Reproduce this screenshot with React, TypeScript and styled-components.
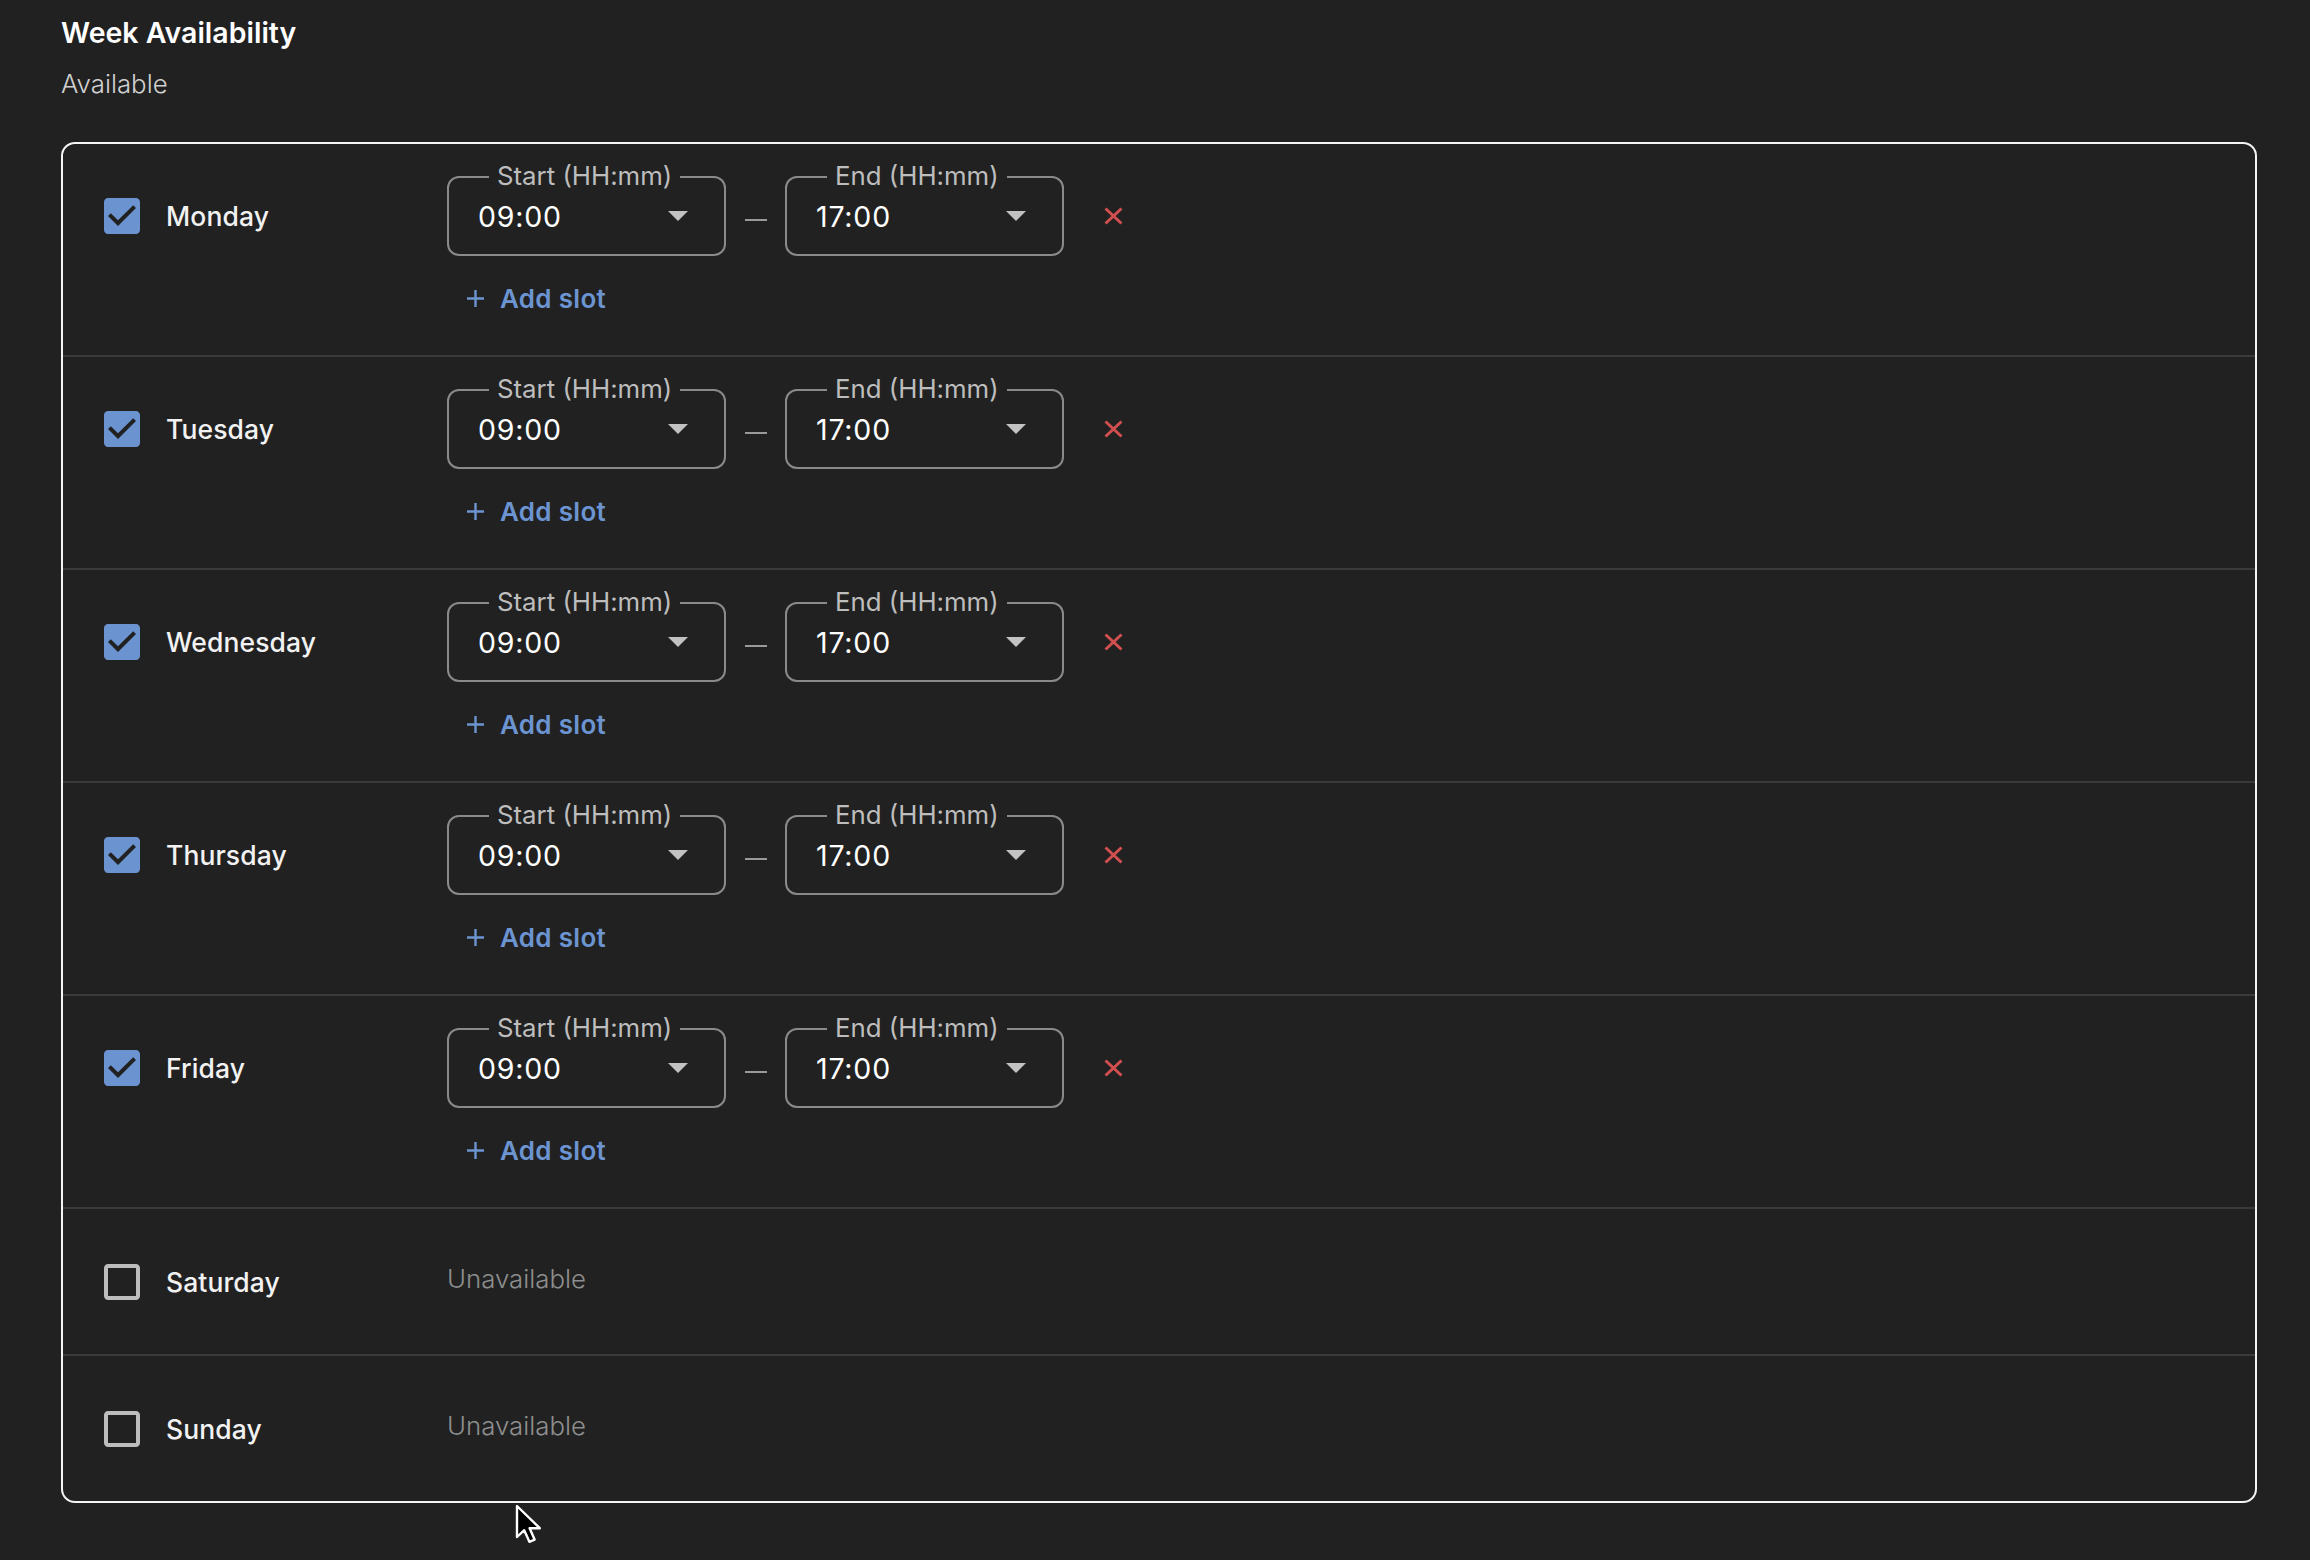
import React from "react";
import styled, { createGlobalStyle } from "styled-components";

const GlobalStyle = createGlobalStyle`
  html, body {
    margin: 0;
    padding: 0;
    background: #212121;
  }
  body {
    font-family: Inter, "Noto Sans", "Liberation Sans", sans-serif;
    color: #ffffff;
  }
  * { box-sizing: border-box; }
`;

const Page = styled.div`
  position: relative;
  min-height: 1560px;
  padding: 16px 53px 0 61px;
`;

const Title = styled.h1`
  margin: 0;
  font-size: 28.5px;
  line-height: 1.2;
  font-weight: 600;
  color: #ffffff;
`;

const Subtitle = styled.p`
  margin: 19px 0 0;
  font-size: 25.8px;
  line-height: 1.2;
  font-weight: 300;
  color: #d0d0d0;
`;

const Card = styled.div`
  margin-top: 42px;
  border: 2px solid #f4f4f4;
  border-radius: 14px;
  overflow: hidden;
`;

const Row = styled.div<{ $available: boolean }>`
  display: flex;
  align-items: ${(p) => (p.$available ? "flex-start" : "center")};
  padding: ${(p) => (p.$available ? "32px 0 39px 35px" : "0 0 0 35px")};
  height: ${(p) => (p.$available ? "auto" : "147px")};
  border-bottom: 2px solid #3a3a3a;
  &:last-child {
    border-bottom: none;
    height: ${(p) => (p.$available ? "auto" : "145px")};
  }
`;

const DayCell = styled.div`
  width: 349px;
  height: 80px;
  display: flex;
  align-items: center;
  gap: 20px;
  flex-shrink: 0;
`;

const DayName = styled.span`
  font-size: 26.5px;
  font-weight: 500;
  color: #f2f2f2;
  letter-spacing: 0.1px;
`;

const CheckIcon = styled.svg`
  width: 48px;
  height: 48px;
  display: block;
`;

const SlotColumn = styled.div`
  display: flex;
  flex-direction: column;
  align-items: flex-start;
`;

const SlotLine = styled.div`
  display: flex;
  align-items: center;
  height: 80px;
`;

const Field = styled.div`
  position: relative;
  width: 279px;
  height: 80px;
  border: 2px solid #8a8a8a;
  border-radius: 12px;
  display: flex;
  align-items: center;
  justify-content: space-between;
  padding: 0 36px 0 29px;
`;

const FieldLabel = styled.span`
  position: absolute;
  top: -17px;
  left: 40px;
  padding: 0 8px;
  background: #212121;
  font-size: 25.8px;
  line-height: 30px;
  font-weight: 400;
  color: #bdbdbd;
  white-space: nowrap;
`;

const FieldValue = styled.span`
  font-size: 28.5px;
  font-weight: 400;
  color: #ffffff;
  letter-spacing: 0.8px;
`;

const Dash = styled.span`
  width: 22px;
  height: 2px;
  background: #9a9a9a;
  margin: 8px 18px 0 19px;
`;

const RemoveButton = styled.button`
  margin-left: 40px;
  padding: 0;
  border: none;
  background: none;
  display: flex;
  align-items: center;
  cursor: pointer;
`;

const AddSlot = styled.button`
  margin-top: 24px;
  margin-left: 20px;
  padding: 0;
  height: 36px;
  border: none;
  background: none;
  display: flex;
  align-items: center;
  gap: 16px;
  font-family: inherit;
  font-size: 26px;
  font-weight: 600;
  letter-spacing: 0.3px;
  color: #6c94d1;
  cursor: pointer;
`;

const Unavailable = styled.span`
  font-size: 25.8px;
  font-weight: 300;
  color: #8e8e8e;
  margin-top: -6px;
`;

const Cursor = styled.svg`
  position: absolute;
  left: 515px;
  top: 1504px;
  width: 26px;
  height: 40px;
`;

const Checkbox = ({ checked }: { checked: boolean }) => (
  <CheckIcon viewBox="0 0 24 24">
    {checked ? (
      <path
        fill="#6b93d0"
        d="M19 3H5c-1.11 0-2 .9-2 2v14c0 1.1.89 2 2 2h14c1.11 0 2-.9 2-2V5c0-1.1-.89-2-2-2zm-9 14l-5-5 1.41-1.41L10 14.17l7.59-7.59L19 8l-9 9z"
      />
    ) : (
      <path
        fill="#bdbdbd"
        d="M19 5v14H5V5h14m0-2H5c-1.1 0-2 .9-2 2v14c0 1.1.9 2 2 2h14c1.1 0 2-.9 2-2V5c0-1.1-.9-2-2-2z"
      />
    )}
  </CheckIcon>
);

const Arrow = () => (
  <svg width="20" height="10" viewBox="0 0 20 10">
    <path d="M0 0h20L10 10z" fill="#c2c2c2" />
  </svg>
);

const CloseX = () => (
  <svg width="19" height="18" viewBox="0 0 19 18">
    <path d="M1.5 1.5L17.5 16.5M17.5 1.5L1.5 16.5" stroke="#d24f4f" strokeWidth="3" />
  </svg>
);

const Plus = () => (
  <svg width="17" height="17" viewBox="0 0 17 17">
    <path d="M8.5 0v17M0 8.5h17" stroke="#6c94d1" strokeWidth="2.4" />
  </svg>
);

const TimeField = ({ label, value }: { label: string; value: string }) => (
  <Field>
    <FieldLabel>{label}</FieldLabel>
    <FieldValue>{value}</FieldValue>
    <Arrow />
  </Field>
);

const days = [
  { name: "Monday", on: true },
  { name: "Tuesday", on: true },
  { name: "Wednesday", on: true },
  { name: "Thursday", on: true },
  { name: "Friday", on: true },
  { name: "Saturday", on: false },
  { name: "Sunday", on: false },
];

export default function App() {
  return (
    <Page>
      <GlobalStyle />
      <Title>Week Availability</Title>
      <Subtitle>Available</Subtitle>
      <Card>
        {days.map((d) => (
          <Row key={d.name} $available={d.on}>
            <DayCell>
              <Checkbox checked={d.on} />
              <DayName>{d.name}</DayName>
            </DayCell>
            {d.on ? (
              <SlotColumn>
                <SlotLine>
                  <TimeField label="Start (HH:mm)" value="09:00" />
                  <Dash />
                  <TimeField label="End (HH:mm)" value="17:00" />
                  <RemoveButton aria-label="Remove slot">
                    <CloseX />
                  </RemoveButton>
                </SlotLine>
                <AddSlot>
                  <Plus />
                  Add slot
                </AddSlot>
              </SlotColumn>
            ) : (
              <Unavailable>Unavailable</Unavailable>
            )}
          </Row>
        ))}
      </Card>
      <Cursor viewBox="0 0 13 20">
        <path
          d="M1 1v15.5l3.6-3.4 2.6 5.8 2.6-1.1-2.5-5.7h5.1z"
          fill="#000"
          stroke="#fff"
          strokeWidth="1.2"
          strokeLinejoin="round"
        />
      </Cursor>
    </Page>
  );
}
